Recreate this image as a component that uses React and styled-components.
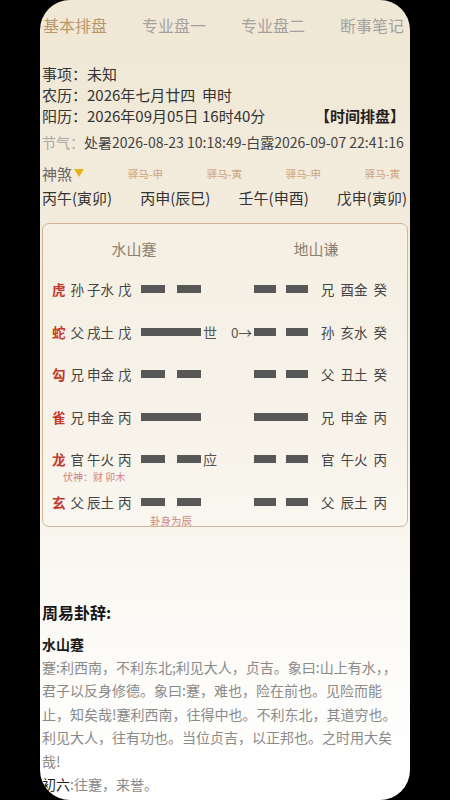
import React from 'react';
import styled, { createGlobalStyle } from 'styled-components';

const GlobalStyle = createGlobalStyle`
  html, body { margin: 0; padding: 0; background: #000; }
  body { font-family: "Noto Sans CJK SC", "Noto Sans", sans-serif; }
  * { box-sizing: border-box; }
`;

const Screen = styled.div`
  width: 370px;
  height: 800px;
  margin: 0 auto;
  border-radius: 30px;
  overflow: hidden;
  padding: 0 2px;
  background: linear-gradient(180deg, #f0e7d4 0%, #f3ecde 30%, #f6f1e6 55%, #fbf9f4 75%, #fefefd 92%, #ffffff 100%);
`;

const TabBar = styled.div`
  display: flex;
  justify-content: space-between;
  padding: 14px 4px 0 1px;
`;

const Tab = styled.div`
  font-size: 16px;
  line-height: 22px;
  color: ${p => (p.$active ? '#b89868' : '#a2a2a2')};
`;

const Info = styled.div`
  margin-top: 27px;
`;

const InfoLine = styled.div`
  display: flex;
  justify-content: space-between;
  font-size: 15px;
  line-height: 21px;
  color: #333;
  white-space: pre;
`;

const Label = styled.span`
  color: ${p => p.$muted ? '#a9a9a9' : '#333'};
`;

const Action = styled.span`
  font-weight: 700;
  color: #222;
  padding-right: 3px;
`;

const JieQi = styled.div`
  margin-top: 6px;
  font-size: 14px;
  line-height: 20px;
  color: #444;
  white-space: nowrap;
`;

const ShenSha = styled.div`
  margin-top: 11px;
  height: 20px;
  display: flex;
  align-items: center;
  justify-content: space-between;
  padding-right: 8px;
`;

const ShaLabel = styled.span`
  display: flex;
  align-items: center;
  font-size: 15px;
  color: #666;
  gap: 2px;
`;

const ShaItem = styled.span`
  font-size: 10.5px;
  color: #cda47e;
`;

const Pillars = styled.div`
  margin-top: 4px;
  display: flex;
  justify-content: space-between;
  font-size: 15px;
  line-height: 22px;
  color: #333;
  padding-right: 1px;
`;

const Board = styled.div`
  margin-top: 14px;
  border: 1.5px solid #cdb595;
  border-radius: 7px;
  background: rgba(255, 255, 255, 0.18);
  padding: 15px 0 3px;
`;

const HexHeader = styled.div`
  display: grid;
  grid-template-columns: 1fr 1fr;
  text-align: center;
  font-size: 15px;
  line-height: 20px;
  color: #8c7f6e;
`;

const Rows = styled.div`
  margin-top: 9px;
`;

const Row = styled.div`
  position: relative;
  height: 42.5px;
  display: flex;
  align-items: center;
  padding-left: 9px;
  font-size: 13.5px;
  color: #444;
`;

const LeftCell = styled.div`
  width: 89px;
  display: flex;
  align-items: center;
`;

const Animal = styled.span`
  color: #c4372b;
  font-weight: 700;
  margin-right: 5px;
`;

const YaoText = styled.span`
  display: flex;
  gap: ${p => p.$gap}px;
  padding-left: ${p => p.$pad || 0}px;
`;

const Bar = styled.div`
  width: ${p => p.$w}px;
  height: 8px;
  display: flex;
  justify-content: space-between;
`;

const Seg = styled.div`
  width: ${p => (p.$full ? '100%' : '40%')};
  height: 100%;
  background: #585858;
`;

const Mark = styled.div`
  width: 19px;
  padding-left: 2px;
  font-size: 14px;
  color: #555;
`;

const Change = styled.div`
  width: 34px;
  text-align: right;
  padding-right: 2px;
  font-size: 13.5px;
  color: #555;
`;

const Note = styled.span`
  position: absolute;
  left: ${p => p.$left}px;
  top: ${p => p.$top}px;
  font-size: ${p => p.$size}px;
  line-height: 12px;
  color: #d27f7f;
  white-space: nowrap;
`;

const Section = styled.div`
  margin-top: 74px;
`;

const Title = styled.div`
  font-size: 16px;
  font-weight: 700;
  line-height: 22px;
  color: #151515;
`;

const SubTitle = styled.div`
  margin-top: 11px;
  font-size: 14px;
  font-weight: 700;
  line-height: 20px;
  color: #1a1a1a;
`;

const Body = styled.div`
  margin-top: 1.5px;
  font-size: 14px;
  line-height: 23.5px;
  color: #8a8a8a;
`;

const Strong = styled.span`
  color: #222;
`;

function YaoBar({ type, w }) {
  return (
    <Bar $w={w}>
      {type === 'yang' ? <Seg $full /> : (<><Seg /><Seg /></>)}
    </Bar>
  );
}

const rows = [
  { a: '虎', l: ['孙', '子水', '戊'], lb: 'yin', m: '', c: '', rb: 'yin', r: ['兄', '酉金', '癸'] },
  { a: '蛇', l: ['父', '戌土', '戊'], lb: 'yang', m: '世', c: '0→', rb: 'yin', r: ['孙', '亥水', '癸'] },
  { a: '勾', l: ['兄', '申金', '戊'], lb: 'yin', m: '', c: '', rb: 'yin', r: ['父', '丑土', '癸'] },
  { a: '雀', l: ['兄', '申金', '丙'], lb: 'yang', m: '', c: '', rb: 'yang', r: ['兄', '申金', '丙'] },
  { a: '龙', l: ['官', '午火', '丙'], lb: 'yin', m: '应', c: '', rb: 'yin', r: ['官', '午火', '丙'], note: { t: '伏神：财 卯木', left: 20, top: 33, size: 10 } },
  { a: '玄', l: ['父', '辰土', '丙'], lb: 'yin', m: '', c: '', rb: 'yin', r: ['父', '辰土', '丙'], note: { t: '卦身为辰', left: 107, top: 34, size: 10.5 } },
];

const tabs = ['基本排盘', '专业盘一', '专业盘二', '断事笔记'];
const sha = ['驿马-申', '驿马-寅', '驿马-申', '驿马-寅'];
const pillars = ['丙午(寅卯)', '丙申(辰巳)', '壬午(申酉)', '戊申(寅卯)'];

export default function App() {
  return (
    <>
      <GlobalStyle />
      <Screen>
        <TabBar>
          {tabs.map((t, i) => <Tab key={t} $active={i === 0}>{t}</Tab>)}
        </TabBar>
        <Info>
          <InfoLine><span><Label>事项：</Label>未知</span></InfoLine>
          <InfoLine><span><Label>农历：</Label>{'2026年七月廿四  申时'}</span></InfoLine>
          <InfoLine><span><Label>阳历：</Label>2026年09月05日 16时40分</span><Action>【时间排盘】</Action></InfoLine>
        </Info>
        <JieQi><Label $muted>节气：</Label>处暑2026-08-23 10:18:49-白露2026-09-07 22:41:16</JieQi>
        <ShenSha>
          <ShaLabel>
            神煞
            <svg width="10" height="8" viewBox="0 0 10 8"><polygon points="0,0 10,0 5,8" fill="#e6b21c" /></svg>
          </ShaLabel>
          {sha.map((s, i) => <ShaItem key={i}>{s}</ShaItem>)}
        </ShenSha>
        <Pillars>
          {pillars.map((p, i) => <span key={i}>{p}</span>)}
        </Pillars>
        <Board>
          <HexHeader><span>水山蹇</span><span>地山谦</span></HexHeader>
          <Rows>
            {rows.map((r, i) => (
              <Row key={i}>
                <LeftCell>
                  <Animal>{r.a}</Animal>
                  <YaoText $gap={3}><span>{r.l[0]}</span><span>{r.l[1]}</span></YaoText>
                  <YaoText $pad={4}><span>{r.l[2]}</span></YaoText>
                </LeftCell>
                <YaoBar type={r.lb} w={60} />
                <Mark>{r.m}</Mark>
                <Change>{r.c}</Change>
                <YaoBar type={r.rb} w={54} />
                <YaoText $gap={6} $pad={13}>{r.r.map((x, j) => <span key={j}>{x}</span>)}</YaoText>
                {r.note && <Note $left={r.note.left} $top={r.note.top} $size={r.note.size}>{r.note.t}</Note>}
              </Row>
            ))}
          </Rows>
        </Board>
        <Section>
          <Title>周易卦辞:</Title>
          <SubTitle>水山蹇</SubTitle>
          <Body>
            <div>蹇:利西南，不利东北;利见大人，贞吉。象曰:山上有水，，君子以反身修德。象曰:蹇，难也，险在前也。见险而能止，知矣哉!蹇利西南，往得中也。不利东北，其道穷也。利见大人，往有功也。当位贞吉，以正邦也。之时用大矣哉!</div>
            <div><Strong>初六</Strong>:往蹇，来誉。</div>
          </Body>
        </Section>
      </Screen>
    </>
  );
}
